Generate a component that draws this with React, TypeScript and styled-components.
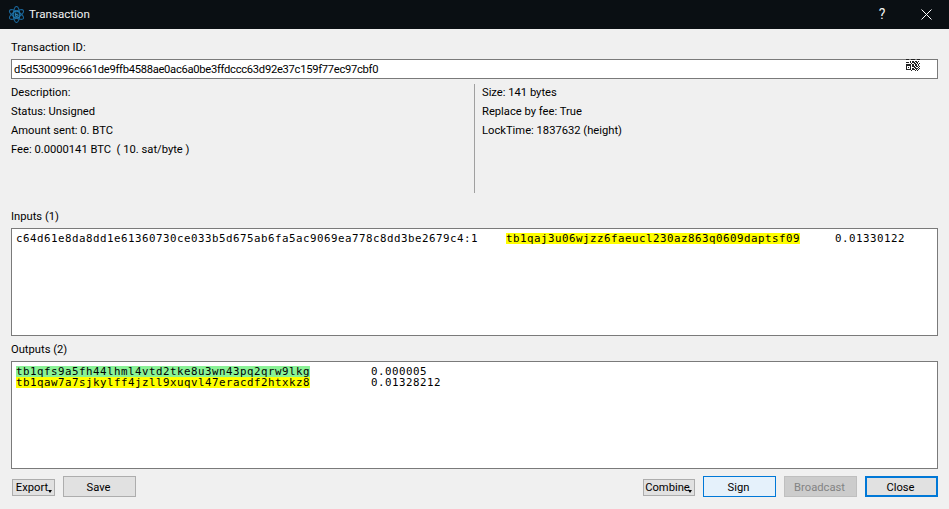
import * as React from 'react';
import styled, { createGlobalStyle } from 'styled-components';

const GlobalStyle = createGlobalStyle`
  html, body {
    margin: 0;
    padding: 0;
    height: 100%;
    background: #f0f0f0;
  }
  body {
    font-family: Roboto, 'Noto Sans', sans-serif;
    font-size: 11.2px;
    color: #000;
    overflow: hidden;
  }
`;

function AppLogo() {
  return (
    <svg width="17" height="17" viewBox="0 0 17 17" fill="none" stroke="#1a6496" strokeWidth="1.1">
      <ellipse cx="8.5" cy="8.5" rx="8" ry="3.2" transform="rotate(30 8.5 8.5)" />
      <ellipse cx="8.5" cy="8.5" rx="8" ry="3.2" transform="rotate(-30 8.5 8.5)" />
      <ellipse cx="8.5" cy="8.5" rx="8" ry="3.2" transform="rotate(90 8.5 8.5)" />
      <circle cx="8.5" cy="8.5" r="3.4" fill="#0a2a3c" stroke="#1f78b0" />
      <path d="M7.6 6.6 V10.4 H9 Q10 10.4 10 9.4 Q10 8.5 9 8.5 H7.6" strokeWidth="0.8" stroke="#3a95cc" />
    </svg>
  );
}

function CloseIcon() {
  return (
    <svg width="11" height="11" viewBox="0 0 11 11" stroke="#fff" strokeWidth="1">
      <path d="M0.5 0.5 L10.5 10.5 M10.5 0.5 L0.5 10.5" />
    </svg>
  );
}

const qrCells = [
  '1110011100111',
  '0000000000000',
  '0000101011010',
  '1110101101100',
  '0000010110101',
  '1111101011010',
  '1000101101101',
  '1010100110010',
  '1000101011101',
  '1111101101010',
  '0000010010100',
];

function QrIcon() {
  return (
    <svg width="14" height="12" viewBox="0 0 13 11" shapeRendering="crispEdges">
      {qrCells.map((row, y) =>
        row.split('').map((c, x) =>
          c === '1' ? <rect key={`${x}-${y}`} x={x} y={y} width="1" height="1" fill="#222" /> : null
        )
      )}
    </svg>
  );
}

export default function App() {
  return (
    <Window>
      <GlobalStyle />
      <TitleBar>
        <AppLogo />
        <TitleText>Transaction</TitleText>
        <HelpMark>?</HelpMark>
        <CloseSlot>
          <CloseIcon />
        </CloseSlot>
      </TitleBar>
      <Body>
        <FieldLabel>Transaction ID:</FieldLabel>
        <TxIdBox>
          d5d5300996c661de9ffb4588ae0ac6a0be3ffdccc63d92e37c159f77ec97cbf0
          <QrSlot>
            <QrIcon />
          </QrSlot>
        </TxIdBox>
        <InfoSplit>
          <InfoLeft>
            <InfoLine>Description:</InfoLine>
            <InfoLine>Status: Unsigned</InfoLine>
            <InfoLine>Amount sent: 0. BTC</InfoLine>
            <InfoLine>Fee: 0.0000141 BTC &nbsp;( 10. sat/byte )</InfoLine>
          </InfoLeft>
          <InfoRight>
            <InfoLine>Size: 141 bytes</InfoLine>
            <InfoLine>Replace by fee: True</InfoLine>
            <InfoLine>LockTime: 1837632 (height)</InfoLine>
          </InfoRight>
        </InfoSplit>
        <SectionLabel $gap={15}>Inputs (1)</SectionLabel>
        <ListBox>
          <InputRow>
            c64d61e8da8dd1e61360730ce033b5d675ab6fa5ac9069ea778c8dd3be2679c4:1
            <Address $tone="yellow" $gap={28}>tb1qaj3u06wjzz6faeucl230az863q0609daptsf09</Address>
            <Amount $gap={35}>0.01330122</Amount>
          </InputRow>
        </ListBox>
        <SectionLabel $gap={5}>Outputs (2)</SectionLabel>
        <ListBox>
          <OutputRow>
            <Address $tone="green">tb1qfs9a5fh44lhml4vtd2tke8u3wn43pq2qrw9lkg</Address>
            <Amount $gap={61}>0.000005</Amount>
          </OutputRow>
          <OutputRow>
            <Address $tone="yellow">tb1qaw7a7sjkylff4jzll9xuqvl47eracdf2htxkz8</Address>
            <Amount $gap={61}>0.01328212</Amount>
          </OutputRow>
        </ListBox>
        <ButtonBar>
          <MenuButton $width={43}>Export</MenuButton>
          <PushButton>Save</PushButton>
          <Spacer />
          <MenuButton $width={52}>Combine</MenuButton>
          <PushButton $variant="hover">Sign</PushButton>
          <PushButton $variant="disabled" disabled>Broadcast</PushButton>
          <PushButton $variant="default">Close</PushButton>
        </ButtonBar>
      </Body>
    </Window>
  );
}

const Window = styled.div`
  width: 949px;
  height: 509px;
  display: flex;
  flex-direction: column;
  background: #f0f0f0;
`;

const TitleBar = styled.header`
  height: 29px;
  background: #0a0f13;
  color: #f2f2f2;
  display: flex;
  align-items: center;
  padding-left: 8px;
  flex-shrink: 0;
`;

const TitleText = styled.span`
  font-size: 11.6px;
  margin: -1px 0 0 4px;
  flex: 1;
`;

const HelpMark = styled.span`
  font-size: 14px;
  width: 46px;
  text-align: center;
  margin: -1px -1px 0 0;
`;

const CloseSlot = styled.span`
  width: 45px;
  display: flex;
  justify-content: center;
`;

const Body = styled.main`
  flex: 1;
  display: flex;
  flex-direction: column;
  padding: 11px 11px 0;
`;

const FieldLabel = styled.div`
  height: 19px;
  line-height: 16px;
`;

const TxIdBox = styled.div`
  position: relative;
  height: 20px;
  box-sizing: border-box;
  border: 1px solid #7a7a7a;
  background: #fff;
  padding-left: 2px;
  line-height: 19px;
  white-space: nowrap;
  letter-spacing: -0.28px;
`;

const QrSlot = styled.span`
  position: absolute;
  right: 17px;
  top: -1px;
  height: 12px;
  display: flex;
`;

const InfoSplit = styled.section`
  display: flex;
  margin-top: 5px;
  height: 109px;
`;

const InfoLeft = styled.div`
  width: 464px;
  border-right: 1px solid #a0a0a0;
  box-sizing: border-box;
`;

const InfoRight = styled.div`
  padding-left: 7px;
`;

const InfoLine = styled.div`
  height: 19px;
  line-height: 17px;
`;

const SectionLabel = styled.div<{ $gap: number }>`
  height: 20px;
  line-height: 17px;
  margin-top: ${(p) => p.$gap}px;
`;

const ListBox = styled.div`
  height: 108px;
  box-sizing: border-box;
  border: 1px solid #7a7a7a;
  background: #fff;
  padding: 4px;
  font-family: 'DejaVu Sans Mono', monospace;
  font-size: 10.8px;
  letter-spacing: 0.5px;
  white-space: pre;
`;

const InputRow = styled.div`
  line-height: 12px;
`;

const OutputRow = styled.div`
  line-height: 11px;
  height: 11px;
`;

const Address = styled.span<{ $tone: 'yellow' | 'green'; $gap?: number }>`
  display: inline-block;
  height: 11px;
  line-height: 11px;
  vertical-align: top;
  background: ${(p) => (p.$tone === 'yellow' ? '#ffff00' : '#8af296')};
  margin-left: ${(p) => p.$gap ?? 0}px;
`;

const Amount = styled.span<{ $gap: number }>`
  display: inline-block;
  height: 11px;
  line-height: 11px;
  vertical-align: top;
  margin-left: ${(p) => p.$gap}px;
`;

const ButtonBar = styled.footer`
  display: flex;
  align-items: center;
  gap: 8px;
  margin-top: 7px;
  height: 21px;
`;

const Spacer = styled.div`
  flex: 1;
`;

const PushButton = styled.button<{ $variant?: 'hover' | 'disabled' | 'default' }>`
  width: 73px;
  height: 21px;
  box-sizing: border-box;
  padding: 1px 2px 0 0;
  font: inherit;
  color: ${(p) => (p.$variant === 'disabled' ? '#838383' : '#000')};
  background: ${(p) =>
    p.$variant === 'hover' ? '#e5f1fb' : p.$variant === 'disabled' ? '#cccccc' : '#e1e1e1'};
  border: ${(p) => (p.$variant === 'default' ? '2px' : '1px')} solid
    ${(p) =>
      p.$variant === 'hover' || p.$variant === 'default'
        ? '#0078d7'
        : p.$variant === 'disabled'
          ? '#bfbfbf'
          : '#adadad'};
`;

const MenuButton = styled.button<{ $width: number }>`
  position: relative;
  width: ${(p) => p.$width}px;
  height: 17px;
  margin: 2px 0 0 1px;
  box-sizing: border-box;
  padding: 0 3px 0 0;
  font: inherit;
  background: #e1e1e1;
  border: 1px solid #adadad;

  &::after {
    content: '';
    position: absolute;
    right: 2px;
    bottom: 2px;
    border-left: 2.5px solid transparent;
    border-right: 2.5px solid transparent;
    border-top: 3px solid #000;
  }
`;
